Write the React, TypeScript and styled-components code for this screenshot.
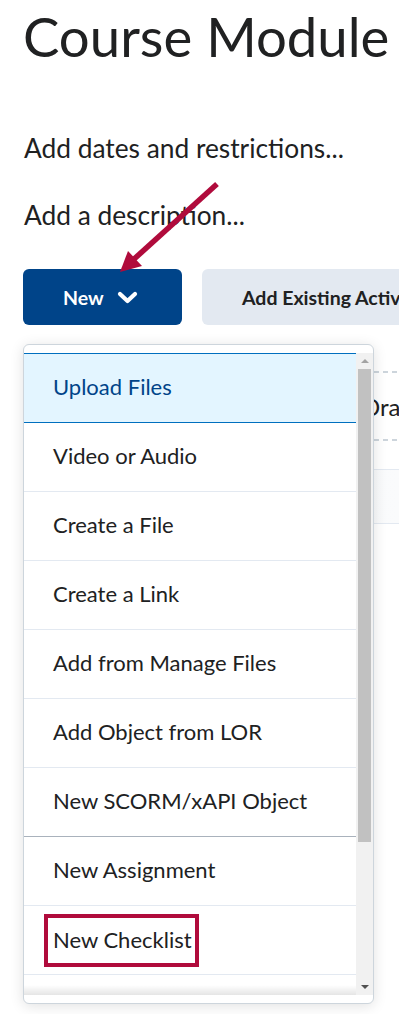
import React from "react";
import styled, { createGlobalStyle } from "styled-components";

const GlobalStyle = createGlobalStyle`
  html, body {
    margin: 0;
    padding: 0;
    background: #ffffff;
    overflow: hidden;
  }
  body {
    font-family: Lato, "Noto Sans", "Liberation Sans", sans-serif;
    color: #202122;
  }
  * { box-sizing: border-box; }
`;

const Page = styled.div`
  position: relative;
  width: 399px;
  height: 1014px;
  overflow: hidden;
  padding-top: 4px;
`;

const Section = styled.div`
  padding-left: 23px;
`;

const Title = styled.h1`
  margin: 0;
  font-size: 54.5px;
  line-height: 64px;
  font-weight: 400;
  color: #202122;
  white-space: nowrap;
`;

const TextLink = styled.div<{ $top: number }>`
  margin-top: ${(p) => p.$top}px;
  padding-left: 1px;
  font-size: 26.3px;
  line-height: 31px;
  color: #202122;
  white-space: nowrap;
`;

const ButtonRow = styled.div`
  display: flex;
  gap: 20px;
  margin-top: 38px;
  white-space: nowrap;
`;

const Button = styled.button<{ $primary?: boolean }>`
  flex-shrink: 0;
  display: flex;
  align-items: center;
  gap: 13px;
  height: 56px;
  padding: 0 40px;
  border: none;
  border-radius: 6px;
  font-family: Lato, "Noto Sans", sans-serif;
  font-size: 19.5px;
  font-weight: 700;
  background: ${(p) => (p.$primary ? "#004489" : "#e3e9f1")};
  color: ${(p) => (p.$primary ? "#ffffff" : "#202122")};
  width: ${(p) => (p.$primary ? "159px" : "auto")};
`;

const DropZone = styled.div`
  margin-top: 46px;
  height: 70px;
  display: flex;
  align-items: center;
  padding-left: 339px;
  white-space: nowrap;
  font-size: 24px;
  color: #202122;
  background:
    repeating-linear-gradient(90deg, #cdd5dc 0 5px, transparent 5px 9px) top left / 100% 2px no-repeat,
    repeating-linear-gradient(90deg, #cdd5dc 0 5px, transparent 5px 9px) bottom left / 100% 2px no-repeat;
`;

const ListRow = styled.div`
  margin-top: 28px;
  height: 55px;
  border-top: 1px solid #e3e9f1;
  border-bottom: 1px solid #e3e9f1;
  background: linear-gradient(90deg, #f3f5f8, #fafbfc);
`;

const Menu = styled.div`
  position: absolute;
  top: 344px;
  left: 23px;
  width: 351px;
  height: 660px;
  border: 1px solid #cdd5dc;
  border-radius: 6px;
  background: #ffffff;
  box-shadow: 0 2px 14px rgba(0, 0, 0, 0.12);
  padding: 8px 0 8px 0;
  display: flex;
  flex-direction: column;
`;

const MenuBody = styled.div`
  position: relative;
  flex: 1;
  display: flex;
  overflow: hidden;
`;

const ItemList = styled.ul`
  flex: 1;
  margin: 0;
  padding: 0;
  list-style: none;
  overflow: hidden;
`;

const Item = styled.li<{ $active?: boolean; $group?: boolean }>`
  height: ${(p) => (p.$active ? 70 : 69)}px;
  display: flex;
  align-items: center;
  padding: 0 0 3px 29px;
  font-size: 22px;
  color: ${(p) => (p.$active ? "#004489" : "#202122")};
  background: ${(p) => (p.$active ? "#e3f5ff" : "#ffffff")};
  border-top: ${(p) => (p.$active ? "1px solid #006fbf" : "none")};
  border-bottom: 1px solid
    ${(p) => (p.$active ? "#006fbf" : p.$group ? "#a9b2bc" : "#e3e9f1")};
  white-space: nowrap;
`;

const Label = styled.span<{ $marked?: boolean }>`
  display: inline-block;
  line-height: 26px;
  ${(p) =>
    p.$marked
      ? `
    margin: 3px 0 0 -9px;
    padding: 9px 3px 10px 5px;
    border: 4px solid #b00b3c;
  `
      : ""}
`;

const Scrollbar = styled.div`
  width: 17px;
  flex-shrink: 0;
  background: #f1f1f1;
  display: flex;
  flex-direction: column;
  align-items: center;
`;

const ScrollArrow = styled.div<{ $down?: boolean }>`
  height: 16px;
  width: 100%;
  display: flex;
  align-items: center;
  justify-content: center;
  &::after {
    content: "";
    width: 0;
    height: 0;
    border-left: 4px solid transparent;
    border-right: 4px solid transparent;
    ${(p) =>
      p.$down
        ? "border-top: 4px solid #505050;"
        : "border-bottom: 4px solid #a3a3a3;"}
  }
`;

const ScrollTrack = styled.div`
  flex: 1;
  width: 100%;
  padding: 0 2px;
`;

const Thumb = styled.div`
  height: 473px;
  background: #c1c1c1;
`;

const BottomFade = styled.div`
  position: absolute;
  left: 0;
  right: 17px;
  bottom: 0;
  height: 10px;
  background: linear-gradient(rgba(0, 0, 0, 0), rgba(0, 0, 0, 0.1));
`;

const Annotation = styled.svg`
  position: absolute;
  top: 0;
  left: 0;
  pointer-events: none;
`;

const Chevron = () => (
  <svg width="21" height="13" viewBox="0 0 21 13">
    <path
      d="M3 3 L10.5 10 L18 3"
      fill="none"
      stroke="#ffffff"
      strokeWidth="4.2"
      strokeLinecap="round"
      strokeLinejoin="round"
    />
  </svg>
);

const items = [
  "Upload Files",
  "Video or Audio",
  "Create a File",
  "Create a Link",
  "Add from Manage Files",
  "Add Object from LOR",
  "New SCORM/xAPI Object",
  "New Assignment",
  "New Checklist",
  "New Discussion",
];

export default function App() {
  return (
    <>
      <GlobalStyle />
      <Page>
        <Section>
          <Title>Course Module</Title>
          <TextLink $top={65}>Add dates and restrictions...</TextLink>
          <TextLink $top={36}>Add a description...</TextLink>
          <ButtonRow>
            <Button $primary>
              New <Chevron />
            </Button>
            <Button>Add Existing Activities</Button>
          </ButtonRow>
          <DropZone>Drag and drop files here to create and update topics</DropZone>
          <ListRow />
        </Section>

        <Menu>
          <MenuBody>
            <ItemList>
              {items.map((label, i) => (
                <Item key={label} $active={i === 0} $group={i === 6}>
                  <Label $marked={label === "New Checklist"}>{label}</Label>
                </Item>
              ))}
            </ItemList>
            <Scrollbar>
              <ScrollArrow />
              <ScrollTrack>
                <Thumb />
              </ScrollTrack>
              <ScrollArrow $down />
            </Scrollbar>
            <BottomFade />
          </MenuBody>
        </Menu>

        <Annotation width="399" height="300" viewBox="0 0 399 300">
          <line x1="217" y1="184" x2="133" y2="260" stroke="#b00b3c" strokeWidth="5.5" />
          <polygon points="120,272 128,251 142,266" fill="#b00b3c" />
        </Annotation>
      </Page>
    </>
  );
}
